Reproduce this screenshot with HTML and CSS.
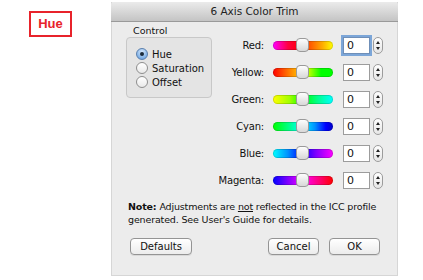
FILE: index.html
```html
<!DOCTYPE html>
<html lang="en">
<head>
  <meta charset="UTF-8">
  <title>6 Axis Color Trim</title>
  <link rel="stylesheet" href="styles.css">
</head>
<body>
  <div class="page">
    <div class="tag">Hue</div>

    <div class="dialog">
      <div class="titlebar">6 Axis Color Trim</div>
      <div class="dialog-body">
        <div class="top">
          <div class="control">
            <div class="control-label">Control</div>
            <div class="group">
              <div class="radio"><span class="dot checked"></span>Hue</div>
              <div class="radio"><span class="dot"></span>Saturation</div>
              <div class="radio"><span class="dot"></span>Offset</div>
            </div>
          </div>

          <div class="sliders">
            <div class="row">
              <span class="name">Red:</span>
              <span class="track red"><span class="thumb"></span></span>
              <span class="field focused">0</span>
              <span class="stepper"><i class="up"></i><i class="down"></i></span>
            </div>
            <div class="row">
              <span class="name">Yellow:</span>
              <span class="track yellow"><span class="thumb"></span></span>
              <span class="field">0</span>
              <span class="stepper"><i class="up"></i><i class="down"></i></span>
            </div>
            <div class="row">
              <span class="name">Green:</span>
              <span class="track green"><span class="thumb"></span></span>
              <span class="field">0</span>
              <span class="stepper"><i class="up"></i><i class="down"></i></span>
            </div>
            <div class="row">
              <span class="name">Cyan:</span>
              <span class="track cyan"><span class="thumb"></span></span>
              <span class="field">0</span>
              <span class="stepper"><i class="up"></i><i class="down"></i></span>
            </div>
            <div class="row">
              <span class="name">Blue:</span>
              <span class="track blue"><span class="thumb"></span></span>
              <span class="field">0</span>
              <span class="stepper"><i class="up"></i><i class="down"></i></span>
            </div>
            <div class="row">
              <span class="name">Magenta:</span>
              <span class="track magenta"><span class="thumb"></span></span>
              <span class="field">0</span>
              <span class="stepper"><i class="up"></i><i class="down"></i></span>
            </div>
          </div>
        </div>

        <p class="note"><b>Note:</b> Adjustments are <u>not</u> reflected in the ICC profile<br>generated. See User's Guide for details.</p>

        <div class="buttons">
          <button type="button" class="btn defaults">Defaults</button>
          <button type="button" class="btn cancel">Cancel</button>
          <button type="button" class="btn ok">OK</button>
        </div>
      </div>
    </div>
  </div>
</body>
</html>
```

FILE: styles.css
```css
/* page */
body {
  margin: 0;
  padding: 0;
  background-color: #ffffff;
  font-family: "DejaVu Sans", sans-serif;
  font-size: 9.5px;
  color: #111;
}
.page {
  display: flex;
  align-items: flex-start;
  padding-top: 2px;
}
.tag {
  margin: 9px 0 0 29px;
  width: 39px;
  height: 22px;
  border: 2px solid #e8232b;
  color: #e8232b;
  font-family: "Liberation Sans", Arial, sans-serif;
  font-weight: bold;
  font-size: 13px;
  line-height: 22px;
  text-align: center;
}

/* dialog window */
.dialog {
  margin-left: 39px;
  width: 287px;
  height: 274px;
  background-color: #ececec;
  box-sizing: border-box;
  border: 1px solid #d6d6d6;
  border-top: none;
}
.titlebar {
  height: 19px;
  line-height: 19px;
  text-align: center;
  font-size: 10.5px;
  color: #222;
  background: linear-gradient(#ebebeb, #c4c4c4);
  border-bottom: 1px solid #9a9a9a;
  border-radius: 3px 3px 0 0;
  margin: 0 -1px;
}
.dialog-body {
  padding: 3px 0 0 0;
}
.top {
  display: flex;
  align-items: flex-start;
}

/* control group */
.control {
  margin-left: 14px;
  width: 86px;
}
.control-label {
  height: 12px;
  line-height: 12px;
  padding-left: 7px;
}
.group {
  height: 61px;
  box-sizing: border-box;
  border: 1px solid #c8c8c8;
  border-radius: 4px;
  background-color: #e4e4e4;
  padding-top: 9px;
}
.radio {
  display: flex;
  align-items: center;
  height: 14px;
  padding-left: 9px;
  font-size: 10px;
}
.dot {
  width: 10px;
  height: 10px;
  border-radius: 50%;
  border: 1px solid #8e8e8e;
  background: linear-gradient(#ffffff, #e9e9e9);
  margin-right: 4px;
  display: flex;
  align-items: center;
  justify-content: center;
}
.dot.checked {
  border-color: #5a7fae;
  background: radial-gradient(circle at 50% 30%, #d6e8fb, #7fb0e6 70%, #5d94d3);
}
.dot.checked::after {
  content: "";
  width: 4px;
  height: 4px;
  border-radius: 50%;
  background-color: #1b2a3a;
}

/* sliders */
.sliders {
  margin-top: 7px;
}
.row {
  display: flex;
  align-items: center;
  height: 27px;
}
.name {
  width: 52px;
  text-align: right;
  font-size: 10px;
  letter-spacing: -0.2px;
}
.track {
  position: relative;
  margin-left: 9px;
  width: 60px;
  height: 9px;
  border-radius: 5px;
  box-shadow: inset 0 0 0 1px rgba(0, 0, 0, 0.15);
}
.thumb {
  position: absolute;
  left: 23px;
  top: -3px;
  width: 13px;
  height: 14px;
  box-sizing: border-box;
  border-radius: 4px;
  border: 1px solid #9a9a9a;
  background: linear-gradient(#fdfdfd, #d8d8d8);
}
.red { background: linear-gradient(to right, #ff00ff, #ff0040 25%, #ff0000 48%, #ff5a00 62%, #ffaa00 82%, #ffff00); }
.yellow { background: linear-gradient(to right, #ff0000, #ff8000 28%, #ffd000 48%, #b8ff00 60%, #00ff00 80%, #00ff00); }
.green { background: linear-gradient(to right, #ffff00, #a0ff00 28%, #00ff00 50%, #00ff90 75%, #00ffff); }
.cyan { background: linear-gradient(to right, #00ff00, #00ff90 28%, #00ffff 48%, #0090ff 70%, #0000ff 88%, #0000c8); }
.blue { background: linear-gradient(to right, #00ffff, #0090ff 25%, #0000ff 48%, #8000ff 72%, #ff00ff); }
.magenta { background: linear-gradient(to right, #0000ff, #8000ff 25%, #ff00ff 50%, #ff0080 75%, #ff0000); }

.field {
  margin-left: 10px;
  width: 27px;
  height: 17px;
  box-sizing: border-box;
  border: 1px solid #9c9c9c;
  background-color: #fff;
  padding-left: 3px;
  line-height: 15px;
  font-size: 11px;
}
.field.focused {
  box-shadow: 0 0 0 2px #7ca6d8;
  border-color: #6f8fb8;
}
.stepper {
  margin-left: 3px;
  width: 10px;
  height: 17px;
  box-sizing: border-box;
  border: 1px solid #9c9c9c;
  border-radius: 5px;
  background: linear-gradient(#fefefe, #e6e6e6);
  display: flex;
  flex-direction: column;
  align-items: center;
  justify-content: center;
  gap: 3px;
}
.stepper i {
  width: 0;
  height: 0;
  border-left: 2px solid transparent;
  border-right: 2px solid transparent;
}
.stepper .up {
  border-bottom: 3px solid #222;
}
.stepper .down {
  border-top: 3px solid #222;
}

/* note and buttons */
.note {
  margin: 6px 0 0 16px;
  width: 262px;
  line-height: 13px;
  font-size: 9.5px;
  letter-spacing: -0.15px;
}
.buttons {
  display: flex;
  margin-top: 12px;
  padding-left: 18px;
}
.btn {
  height: 17px;
  box-sizing: border-box;
  border: 1px solid #949494;
  border-radius: 4px;
  background: linear-gradient(#ffffff, #ececec);
  font-family: "DejaVu Sans", sans-serif;
  font-size: 10px;
  color: #111;
  padding: 0;
  box-shadow: 0 1px 0 rgba(0, 0, 0, 0.08);
}
.defaults {
  width: 62px;
}
.cancel {
  width: 51px;
  margin-left: 76px;
}
.ok {
  width: 51px;
  margin-left: 10px;
}
```
